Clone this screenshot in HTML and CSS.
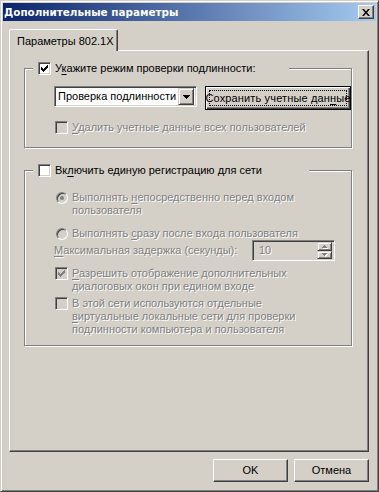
FILE: index.html
```html
<!DOCTYPE html>
<html lang="ru">
<head>
  <meta charset="UTF-8">
  <title>Дополнительные параметры</title>
  <link rel="stylesheet" href="styles.css">
</head>
<body>
  <div class="window">
    <div class="titlebar">
      <span class="title">Дополнительные параметры</span>
      <span class="close">
        <svg width="8" height="7" viewBox="0 0 8 7"><path d="M0 0h2l2 2.5L6 0h2L5 3.5 8 7H6L4 4.5 2 7H0l3-3.5z"/></svg>
      </span>
    </div>

    <div class="tabs">
      <div class="tab">Параметры 802.1X</div>
    </div>

    <div class="panel">
      <fieldset class="group">
        <legend>
          <span class="check"><svg width="7" height="7" viewBox="0 0 7 7"><path d="M0 2h1v3H0zM1 3h1v3H1zM2 4h1v3H2zM3 3h1v3H3zM4 2h1v3H4zM5 1h1v3H5zM6 0h1v3H6z"/></svg></span>
          <span class="label">У<u>к</u>ажите режим проверки подлинности:</span>
        </legend>
        <div class="group-body auth">
          <div class="auth-row">
            <div class="select">
              <span class="select-value">Проверка подлинности</span>
              <span class="select-arrow">
                <svg width="7" height="4" viewBox="0 0 7 4"><path d="M0 0h7v1H6v1H5v1H4v1H3V3H2V2H1V1H0z"/></svg>
              </span>
            </div>
            <button class="btn btn-default">Сохранить учетные дан<u>н</u>ые</button>
          </div>
          <div class="option disabled delete">
            <span class="slot"><span class="check"></span></span>
            <span class="label"><u>У</u>далить учетные данные всех пользователей</span>
          </div>
        </div>
      </fieldset>

      <fieldset class="group sso">
        <legend>
          <span class="check"></span>
          <span class="label">Вк<u>л</u>ючить единую регистрацию для сети</span>
        </legend>
        <div class="group-body">
          <div class="option disabled first">
            <span class="slot"><span class="radio selected"></span></span>
            <span class="label">Выполнять <u>н</u>епосредственно перед входом<br>пользователя</span>
          </div>
          <div class="option disabled after">
            <span class="slot"><span class="radio"></span></span>
            <span class="label">Выполнять <u>с</u>разу после входа пользователя</span>
          </div>
          <div class="delay disabled">
            <span class="label"><u>М</u>аксимальная задержка (секунды):</span>
            <div class="spin">
              <span class="spin-value">10</span>
              <span class="spin-buttons">
                <span class="spin-btn"><svg width="5" height="3" viewBox="0 0 5 3"><path d="M2 0h1v1h1v1h1v1H0V2h1V1h1z"/></svg></span>
                <span class="spin-btn"><svg width="5" height="3" viewBox="0 0 5 3"><path d="M0 0h5v1H4v1H3v1H2V2H1V1H0z"/></svg></span>
              </span>
            </div>
          </div>
          <div class="option disabled dialogs">
            <span class="slot"><span class="check"><svg width="7" height="7" viewBox="0 0 7 7"><path d="M0 2h1v3H0zM1 3h1v3H1zM2 4h1v3H2zM3 3h1v3H3zM4 2h1v3H4zM5 1h1v3H5zM6 0h1v3H6z"/></svg></span></span>
            <span class="label"><u>Р</u>азрешить отображение дополнительных<br>диалоговых окон при едином входе</span>
          </div>
          <div class="option disabled vlan">
            <span class="slot"><span class="check"></span></span>
            <span class="label">В этой сети используются отдельные<br><u>в</u>иртуальные локальные сети для проверки<br>подлинности компьютера и пользователя</span>
          </div>
        </div>
      </fieldset>
    </div>

    <div class="footer">
      <button class="btn">OK</button>
      <button class="btn">Отмена</button>
    </div>
  </div>
</body>
</html>
```

FILE: styles.css
```css
* {
  box-sizing: border-box;
}
body {
  margin: 0;
  background: #d4d0c8;
  font-family: "Liberation Sans", Arial, sans-serif;
  font-size: 11px;
  line-height: 13px;
  color: #000;
}
u {
  text-decoration-thickness: 1px;
  text-underline-offset: 2px;
}

.window {
  width: 379px;
  height: 492px;
  padding: 2px;
  border: 1px solid;
  border-color: #d4d0c8 #404040 #404040 #d4d0c8;
  box-shadow: inset 1px 1px #fff, inset -1px -1px #808080;
  background: #d4d0c8;
}

.titlebar {
  height: 18px;
  display: flex;
  align-items: center;
  justify-content: space-between;
  padding: 0 2px 0 1px;
  background: linear-gradient(to right, #0a246a, #a6caf0);
}
.title {
  color: #fff;
  font-family: "DejaVu Sans", sans-serif;
  font-size: 10.4px;
  font-weight: bold;
}
.close {
  width: 16px;
  height: 14px;
  display: flex;
  align-items: center;
  justify-content: center;
  background: #d4d0c8;
  border: 1px solid;
  border-color: #fff #404040 #404040 #fff;
  box-shadow: inset -1px -1px #808080;
}

.tabs {
  display: flex;
  margin: 8px 7px 0 6px;
}
.tab {
  position: relative;
  z-index: 1;
  width: 109px;
  height: 22px;
  margin-bottom: -1px;
  padding: 5px 0 0 7px;
  border: 1px solid;
  border-bottom: 0;
  border-color: #fff #404040 transparent #fff;
  border-radius: 2px 2px 0 0;
  box-shadow: inset -1px 0 #808080;
  background: #d4d0c8;
}

.panel {
  height: 402px;
  margin: 0 7px 0 6px;
  padding: 11px 16px 0 14px;
  border: 1px solid;
  border-color: #fff #404040 #404040 #fff;
  box-shadow: inset -1px -1px #808080;
}

.group {
  margin: 0;
  padding: 0;
  min-width: 0;
  border: 1px solid #808080;
  box-shadow: inset 1px 1px #fff, 1px 1px #fff;
}
.group legend {
  display: flex;
  align-items: center;
  gap: 4px;
  height: 13px;
  margin-left: 8px;
  padding: 0 33px 0 5px;
  background: #d4d0c8;
}
.group.sso {
  margin-top: 16px;
}
.group.sso legend {
  padding-right: 47px;
}
.group-body {
  padding: 14px 0 9px 29px;
}
.group-body.auth {
  padding: 11px 0 13px 29px;
}

.check {
  width: 13px;
  height: 13px;
  flex: none;
  display: flex;
  align-items: center;
  justify-content: center;
  border: 1px solid;
  border-color: #808080 #fff #fff #808080;
  box-shadow: inset 1px 1px #404040, inset -1px -1px #d4d0c8;
  background: #fff;
}
.check svg {
  fill: #000;
}
.radio {
  width: 12px;
  height: 12px;
  margin: 1px 0 0 1px;
  border: 1px solid;
  border-color: #808080 #fff #fff #808080;
  border-radius: 50%;
  box-shadow: inset 1px 1px #404040, inset -1px -1px #d4d0c8;
  background: #fff;
  display: flex;
  align-items: center;
  justify-content: center;
}
.radio.selected::after {
  content: "";
  width: 4px;
  height: 4px;
  border-radius: 50%;
  background: #000;
}

.auth-row {
  display: flex;
  align-items: flex-start;
}
.select {
  width: 143px;
  height: 21px;
  display: flex;
  align-items: center;
  padding: 2px;
  border: 1px solid;
  border-color: #808080 #fff #fff #808080;
  box-shadow: inset 1px 1px #404040, inset -1px -1px #d4d0c8;
  background: #fff;
}
.select-value {
  flex: 1;
  padding-left: 1px;
  white-space: nowrap;
  overflow: hidden;
}
.select-arrow {
  width: 16px;
  height: 17px;
  flex: none;
  display: flex;
  align-items: center;
  justify-content: center;
  border: 1px solid;
  border-color: #d4d0c8 #404040 #404040 #d4d0c8;
  box-shadow: inset 1px 1px #fff, inset -1px -1px #808080;
  background: #d4d0c8;
}

.btn {
  position: relative;
  width: 75px;
  height: 23px;
  display: flex;
  align-items: center;
  justify-content: center;
  padding: 0;
  overflow: hidden;
  white-space: nowrap;
  font: inherit;
  color: #000;
  background: #d4d0c8;
  border: 1px solid;
  border-color: #fff #404040 #404040 #fff;
  box-shadow: inset -1px -1px #808080;
}
.btn-default {
  width: 146px;
  height: 24px;
  margin-left: 8px;
  letter-spacing: 0.15px;
  border-color: #000;
  box-shadow: inset 1px 1px #fff, inset -1px -1px #404040, inset -2px -2px #808080;
}
.btn-default::after {
  content: "";
  position: absolute;
  inset: 3px;
  border: 1px dotted #000;
}

.option {
  display: flex;
  align-items: flex-start;
}
.slot {
  width: 13px;
  flex: none;
  margin: 0 4px 0 1px;
}
.option.delete {
  margin-top: 11px;
}
.option.after {
  margin-top: 10px;
}
.option.dialogs {
  margin-top: 6px;
}
.option.vlan {
  margin-top: 4px;
}

.disabled .label,
.disabled .spin-value {
  color: #808080;
  text-shadow: 1px 1px #fff;
}
.disabled .check,
.disabled .radio {
  background: #d4d0c8;
}
.disabled .check svg {
  fill: #808080;
}
.disabled .radio.selected::after {
  background: #808080;
}

.delay {
  display: flex;
  align-items: center;
  justify-content: space-between;
  width: 281px;
}
.spin {
  width: 83px;
  height: 21px;
  display: flex;
  align-items: center;
  padding: 2px;
  border: 1px solid;
  border-color: #808080 #fff #fff #808080;
  box-shadow: inset 1px 1px #404040, inset -1px -1px #d4d0c8;
}
.spin-value {
  flex: 1;
  padding-left: 4px;
}
.spin-buttons {
  display: flex;
  flex-direction: column;
  width: 15px;
  height: 17px;
}
.spin-btn {
  flex: 1;
  display: flex;
  align-items: center;
  justify-content: center;
  border: 1px solid;
  border-color: #d4d0c8 #404040 #404040 #d4d0c8;
  box-shadow: inset 1px 1px #fff, inset -1px -1px #808080;
}
.spin-btn svg {
  fill: #808080;
  filter: drop-shadow(1px 1px 0 #fff);
}

.footer {
  display: flex;
  justify-content: flex-end;
  gap: 6px;
  margin: 7px 7px 0 0;
}
```
